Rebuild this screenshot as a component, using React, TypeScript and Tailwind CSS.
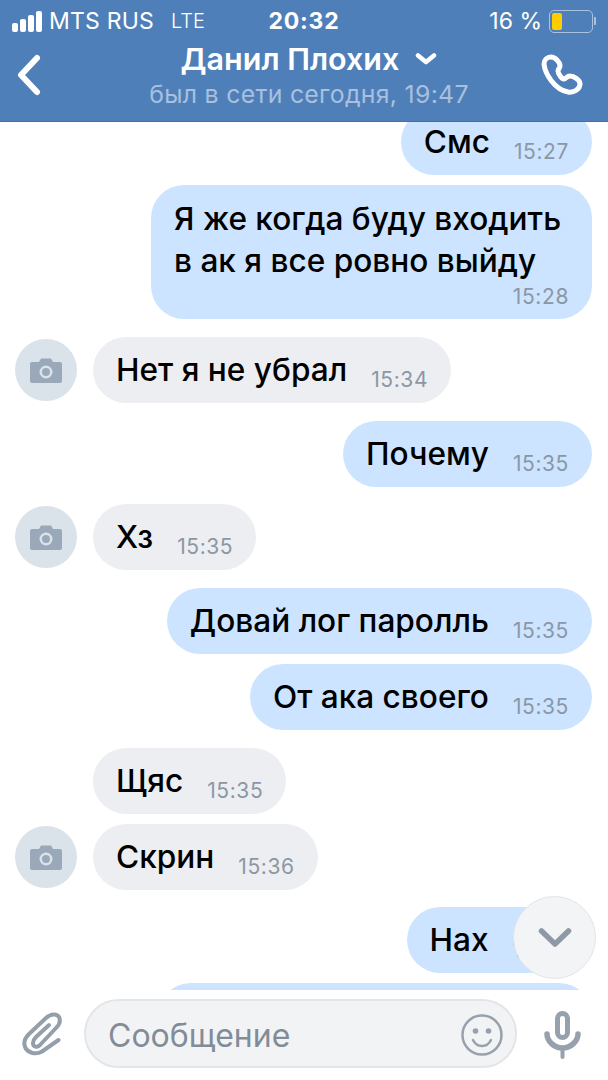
const Avatar = () => (
  <div className="flex h-[62px] w-[62px] shrink-0 items-center justify-center rounded-full bg-[#dae2ea]">
    <svg width="32" height="25" viewBox="0 0 32 25">
      <path
        fillRule="evenodd"
        fill="#99a9ba"
        d="M2 4h7l2-3.5h10l2 3.5h7a2 2 0 0 1 2 2v17a2 2 0 0 1-2 2H2a2 2 0 0 1-2-2V6a2 2 0 0 1 2-2zM16 7.5a6.5 6.5 0 1 0 0 13 6.5 6.5 0 0 0 0-13zM16 10a4 4 0 1 1 0 8 4 4 0 0 1 0-8z"
      />
    </svg>
  </div>
)

const Time = ({ value }: { value: string }) => (
  <span className="text-[21px] leading-none tracking-[0.6px] text-[#8b97a5]">{value}</span>
)

const Outgoing = ({ text, time, mt }: { text: string, time: string, mt: string }) => (
  <div className={`flex justify-end pr-4 ${mt}`}>
    <div className="flex h-[66px] items-center rounded-[33px] bg-[#cce4ff] pl-[23px] pr-[23px]">
      <span className="text-[31.6px] font-medium leading-none text-black">{text}</span>
      <span className="ml-[24px] mt-[19px] flex"><Time value={time} /></span>
    </div>
  </div>
)

const Incoming = ({ text, time, mt, avatar }: { text: string, time: string, mt: string, avatar?: boolean }) => (
  <div className={`flex items-center gap-4 pl-[15px] ${mt}`}>
    {avatar ? <Avatar /> : <div className="w-[62px] shrink-0" />}
    <div className="flex h-[66px] items-center rounded-[33px] bg-[#edeef1] pl-[23px] pr-[23px]">
      <span className="text-[31.6px] font-medium leading-none text-black">{text}</span>
      <span className="ml-[24px] mt-[19px] flex"><Time value={time} /></span>
    </div>
  </div>
)

const Header = () => (
  <div className="h-[122px] shrink-0 border-b border-[#456fa2] bg-[#4f7fb9] text-white">
    <div className="grid h-[40px] grid-cols-3 items-center px-[12px] pt-[2px]">
      <div className="flex items-center">
        <div className="flex items-end gap-[2px]">
          <div className="h-[9px] w-[6px] rounded-[2px] bg-white" />
          <div className="h-[13px] w-[6px] rounded-[2px] bg-white" />
          <div className="h-[17px] w-[6px] rounded-[2px] bg-white" />
          <div className="h-[21px] w-[6px] rounded-[2px] bg-white" />
        </div>
        <span className="ml-[7px] text-[23px] leading-none tracking-[0.2px]">MTS RUS</span>
        <span className="ml-[17px] text-[20px] font-light leading-none">LTE</span>
      </div>
      <div className="text-center text-[23px] font-bold leading-none tracking-[0.8px]">20:32</div>
      <div className="flex items-center justify-end">
        <span className="text-[23px] leading-none">16 %</span>
        <div className="ml-[7px] flex h-[23px] w-[44px] items-center rounded-[5px] border border-[#a9c2e0] p-[2px]">
          <div className="h-full w-[10px] rounded-[2px] bg-[#ffcc00]" />
        </div>
        <div className="ml-[1px] h-[8px] w-[2px] rounded-r-[1px] bg-[#a9c2e0]" />
      </div>
    </div>
    <div className="flex items-center justify-between pl-[16px] pr-[25px]">
      <div className="w-[61px]">
        <svg width="26" height="42" viewBox="0 0 26 42" fill="none">
          <path d="M21 4 5 21l16 17" stroke="#fff" strokeWidth="6" strokeLinecap="round" strokeLinejoin="round" />
        </svg>
      </div>
      <div className="flex flex-col items-center">
        <div className="flex items-center gap-[16px]">
          <span className="text-[30.5px] font-semibold leading-[38px]">Данил Плохих</span>
          <svg width="22" height="14" viewBox="0 0 22 14" fill="none">
            <path d="M3 3.5 11 10l8-6.5" stroke="#fff" strokeWidth="4.5" strokeLinecap="round" strokeLinejoin="round" />
          </svg>
        </div>
        <span className="text-[24.8px] leading-[32px] tracking-[0.3px] text-[#a8c0de]">был в сети сегодня, 19:47</span>
      </div>
      <svg width="42" height="42" viewBox="0 0 42 42" fill="none">
        <path
          d="M10 3C6 3 3 6 3 10 4 20 14 36 27 38 33 39 39 35 39 30 39 26 33 22 29 22 26 22 25 25 23 25 21 25 17 20 17 17 17 15 19 14 19 12 19 8 14 3 10 3Z"
          stroke="#fff"
          strokeWidth="5"
          strokeLinejoin="round"
        />
      </svg>
    </div>
  </div>
)

const InputBar = () => (
  <div className="flex h-[90px] shrink-0 items-start bg-white pl-[22px] pt-[9px]">
    <svg width="40" height="44" viewBox="0 0 40 44" fill="none" className="mt-[13px] shrink-0">
      <path
        d="M36.500 28 20 39.500C14 43 6 41 3.500 36 1 31 3 26 7 22L24 6C29 1.500 35 1.500 37 5 39 9 37 13 34 16L18 33C15 36 11 35 11 31 11 29 12 27 14 25L27 13"
        stroke="#959fab"
        strokeWidth="4"
        strokeLinecap="round"
        strokeLinejoin="round"
      />
    </svg>
    <div className="ml-[22px] flex h-[69px] w-[433px] shrink-0 items-center rounded-[35px] border-2 border-[#e3e5e9] bg-[#f2f3f5] pl-[22px] pr-[12px]">
      <span className="flex-1 pt-[4px] text-[32px] leading-none text-[#828c98]">Сообщение</span>
      <svg width="42" height="42" viewBox="0 0 42 42" fill="none" className="mt-[2px]">
        <circle cx="21" cy="21" r="19.500" stroke="#97a1ad" strokeWidth="2.500" />
        <circle cx="14.500" cy="17" r="2.800" fill="#97a1ad" />
        <circle cx="27.500" cy="17" r="2.800" fill="#97a1ad" />
        <path d="M12 26c2 4 5 6 9 6s7-2 9-6" stroke="#97a1ad" strokeWidth="2.500" strokeLinecap="round" />
      </svg>
    </div>
    <svg width="37" height="48" viewBox="0 0 37 48" fill="none" className="ml-[27px] mt-[12px] shrink-0">
      <rect x="13.500" y="2.500" width="10" height="24" rx="5" stroke="#97a1ad" strokeWidth="5" />
      <path d="M3 23C3 30 10 37 18.500 37 27 37 34 30 34 23" stroke="#97a1ad" strokeWidth="5.500" strokeLinecap="round" />
      <path d="M18.500 37v9" stroke="#97a1ad" strokeWidth="4" strokeLinecap="round" />
    </svg>
  </div>
)

export default function App() {
  return (
    <div className="relative flex h-[1080px] w-[608px] flex-col overflow-hidden bg-white font-['Inter',sans-serif]">
      <Header />
      <div className="flex-1 overflow-hidden">
        <Outgoing text="Смс" time="15:27" mt="-mt-[13px]" />
        <div className="mt-[10px] flex justify-end pr-4">
          <div className="w-[441px] rounded-[33px] bg-[#cce4ff] pb-[12px] pl-[23px] pr-[23px] pt-[13px]">
            <div className="text-[31.6px] font-medium leading-[42px] text-black">
              Я же когда буду входить<br />в ак я все ровно выйду
            </div>
            <div className="mt-[4px] flex justify-end"><Time value="15:28" /></div>
          </div>
        </div>
        <Incoming avatar text="Нет я не убрал" time="15:34" mt="mt-[18px]" />
        <Outgoing text="Почему" time="15:35" mt="mt-[18px]" />
        <Incoming avatar text="Хз" time="15:35" mt="mt-[17px]" />
        <Outgoing text="Довай лог паролль" time="15:35" mt="mt-[18px]" />
        <Outgoing text="От ака своего" time="15:35" mt="mt-[10px]" />
        <Incoming text="Щяс" time="15:35" mt="mt-[18px]" />
        <Incoming avatar text="Скрин" time="15:36" mt="mt-[10px]" />
        <Outgoing text="Нах" time="15:36" mt="mt-[17px]" />
        <div className="mt-[10px] flex justify-end pr-4">
          <div className="h-[66px] w-[434px] rounded-[33px] bg-[#cce4ff]" />
        </div>
      </div>
      <InputBar />
      <div className="absolute left-[513px] top-[896px] flex h-[83px] w-[83px] items-center justify-center rounded-full border border-[#e3e4e7] bg-[#f3f4f6]">
        <svg width="34" height="22" viewBox="0 0 34 22" fill="none">
          <path d="M3.500 4 17 17 30.500 4" stroke="#8f99a6" strokeWidth="5.500" strokeLinecap="round" strokeLinejoin="round" />
        </svg>
      </div>
    </div>
  )
}
